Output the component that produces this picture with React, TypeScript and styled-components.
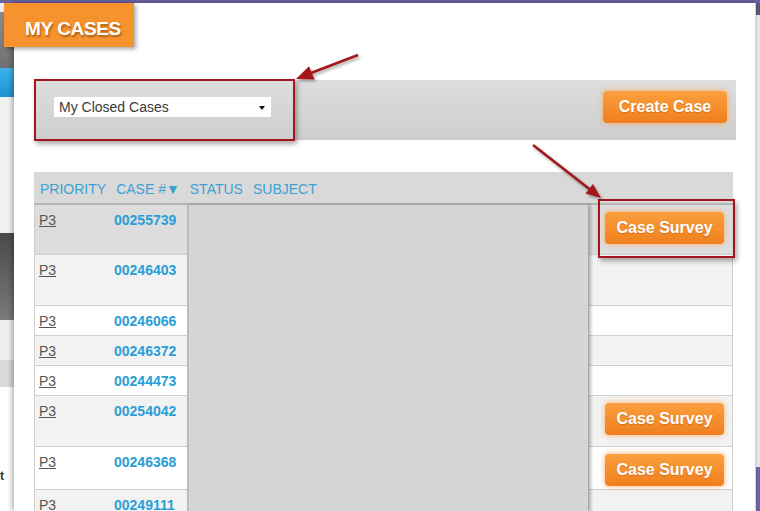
import React from "react";
import styled, { createGlobalStyle } from "styled-components";

const GlobalStyle = createGlobalStyle`
  html, body { margin: 0; padding: 0; background: #fff; }
  body { font-family: "Liberation Sans", Arial, sans-serif; }
  *, *::before, *::after { box-sizing: border-box; }
`;

const Page = styled.div`
  position: relative;
  width: 760px;
  height: 511px;
  overflow: hidden;
  font-family: "Liberation Sans", Arial, sans-serif;
`;

/* ---------- page behind the modal ---------- */
const Backdrop = styled.div`
  display: flex;
  flex-direction: column;
  height: 100%;
`;
const TopBar = styled.div`
  flex: none;
  height: 3px;
  background: #6b62a0;
`;
const BackdropBody = styled.div`
  flex: 1;
  display: flex;
`;
const SideStrip = styled.div<{ $w: number }>`
  flex: none;
  width: ${(p) => p.$w}px;
  display: flex;
  flex-direction: column;
`;
const StripBlock = styled.div<{ $h?: number; $bg: string }>`
  flex: ${(p) => (p.$h ? "none" : "1")};
  height: ${(p) => (p.$h ? `${p.$h}px` : "auto")};
  background: ${(p) => p.$bg};
  overflow: hidden;
  font: bold 12px "Liberation Sans", Arial, sans-serif;
  color: #333;
`;
const CutText = styled.span`
  display: block;
  margin: 82px 0 0 0;
`;
const BackdropFill = styled.div`
  flex: 1;
  background: #fff;
`;

/* ---------- modal ---------- */
const Modal = styled.div`
  position: absolute;
  left: 14px;
  top: 3px;
  width: 742px;
  bottom: 0;
  background: #fff;
  border-right: 1px solid #d2d2d2;
  box-shadow: -2px 0 5px rgba(0, 0, 0, 0.3);
  padding: 0 19px 0 20px;
`;

const TitleTab = styled.div`
  margin-left: -30px;
  width: 130px;
  height: 44px;
  background: #f7932f;
  box-shadow: 2px 2px 4px rgba(0, 0, 0, 0.35);
  padding: 15px 0 0 21px;
  color: #fff;
  font: bold 19px/22px "Liberation Sans", Arial, sans-serif;
  letter-spacing: -0.4px;
  text-shadow: 1px 2px 2px rgba(110, 50, 0, 0.55);
`;

const Toolbar = styled.div`
  margin-top: 33px;
  height: 60px;
  background: linear-gradient(to bottom, #dedede, #cdcdcd);
  display: flex;
  justify-content: space-between;
  align-items: flex-start;
  padding: 0 9px 0 20px;
`;

const SelectBox = styled.div`
  margin-top: 17px;
  width: 217px;
  height: 20px;
  background: #fff;
  padding: 0 4px 0 5px;
  display: flex;
  justify-content: space-between;
  align-items: center;
  color: #3a3a3a;
  font: 14px/20px "Liberation Sans", Arial, sans-serif;
`;
const SelectCaret = styled.span`
  width: 0;
  height: 0;
  border-left: 3.5px solid transparent;
  border-right: 3.5px solid transparent;
  border-top: 4px solid #111;
  margin: 1px 2px 0 0;
`;

const OrangeButton = styled.button<{ $w: number; $mt?: number }>`
  flex: none;
  margin-top: ${(p) => p.$mt ?? 0}px;
  width: ${(p) => p.$w}px;
  height: 32px;
  border: none;
  border-radius: 4px;
  padding: 0;
  background: linear-gradient(to bottom, #fb9f3e, #f07f1d);
  box-shadow: 0 0 5px 1px rgba(255, 175, 105, 0.75);
  color: #fff;
  font: bold 16px/32px "Liberation Sans", Arial, sans-serif;
  text-shadow: 0 1px 1px rgba(150, 70, 0, 0.35);
  text-align: center;
  cursor: pointer;
`;

/* ---------- table ---------- */
const CasesTable = styled.div`
  margin-top: 32px;
  width: 699px;
`;
const HeaderRow = styled.div`
  height: 33px;
  background: #d9d9d9;
  border-bottom: 2px solid #b4b4b4;
  padding: 9px 0 0 6px;
  display: flex;
  gap: 10px;
  color: #3ba2d4;
  font: 14px/16px "Liberation Sans", Arial, sans-serif;
`;
const Body = styled.div`
  position: relative;
`;
const Row = styled.div<{ $h: number; $bg: string }>`
  display: grid;
  grid-template-columns: 153px 401px 1fr;
  height: ${(p) => p.$h}px;
  background: ${(p) => p.$bg};
  border-left: 1px solid #cfcfcf;
  border-right: 1px solid #cfcfcf;
  border-bottom: 1px solid #cfcfcf;
`;
const IdCell = styled.div`
  display: grid;
  grid-template-columns: 75px auto;
  align-content: start;
  padding: 7px 0 0 4px;
  font: 14px/16px "Liberation Sans", Arial, sans-serif;
`;
const Priority = styled.span`
  color: #555;
  text-decoration: underline;
  justify-self: start;
`;
const CaseNo = styled.span`
  color: #2a9ed6;
  font-weight: bold;
`;
const ActionCell = styled.div`
  padding: 7px 0 0 16px;
`;
const Redaction = styled.div`
  position: absolute;
  top: 0;
  left: 153px;
  width: 402px;
  height: 320px;
  background: #d6d6d6;
  border-left: 2px solid #bcbcbc;
  border-right: 1px solid #a8a8a8;
  box-shadow: 2px 0 3px rgba(0, 0, 0, 0.25);
`;

/* ---------- annotations ---------- */
const RedBox = styled.div<{ $x: number; $y: number; $w: number; $h: number }>`
  position: absolute;
  left: ${(p) => p.$x}px;
  top: ${(p) => p.$y}px;
  width: ${(p) => p.$w}px;
  height: ${(p) => p.$h}px;
  border: 2px solid #a3161b;
  box-shadow: 2px 3px 5px rgba(0, 0, 0, 0.35);
  pointer-events: none;
`;
const ArrowLayer = styled.svg`
  position: absolute;
  left: 0;
  top: 0;
  pointer-events: none;
`;

type CaseRow = { no: string; h: number; bg: string; survey?: boolean };
const rows: CaseRow[] = [
  { no: "00255739", h: 50, bg: "#dddddd", survey: true },
  { no: "00246403", h: 51, bg: "#f2f2f2" },
  { no: "00246066", h: 30, bg: "#ffffff" },
  { no: "00246372", h: 30, bg: "#f2f2f2" },
  { no: "00244473", h: 30, bg: "#ffffff" },
  { no: "00254042", h: 51, bg: "#f2f2f2", survey: true },
  { no: "00246368", h: 43, bg: "#ffffff", survey: true },
  { no: "00249111", h: 40, bg: "#f2f2f2" },
];

const leftBlocks = [
  { h: 9, bg: "#ececf2" },
  { h: 56, bg: "linear-gradient(to bottom, #8c8c8c, #6f6f6f)" },
  { h: 29, bg: "linear-gradient(to bottom, #3cb4ea, #1d92d2)" },
  { h: 136, bg: "#f2f2f2" },
  { h: 87, bg: "linear-gradient(to bottom, #4a4a4a, #7a7a7a)" },
  { h: 40, bg: "#efefef" },
  { h: 27, bg: "#dadada" },
];

export default function App() {
  return (
    <Page>
      <GlobalStyle />
      <Backdrop>
        <TopBar />
        <BackdropBody>
          <SideStrip $w={14}>
            {leftBlocks.map((b, i) => (
              <StripBlock key={i} $h={b.h} $bg={b.bg} />
            ))}
            <StripBlock $bg="#ffffff">
              <CutText>t</CutText>
            </StripBlock>
          </SideStrip>
          <BackdropFill />
          <SideStrip $w={4}>
            <StripBlock $h={12} $bg="#5c5a7a" />
            <StripBlock $h={452} $bg="#e9e9e9" />
            <StripBlock $bg="#6e66a3" />
          </SideStrip>
        </BackdropBody>
      </Backdrop>

      <Modal>
        <TitleTab>MY CASES</TitleTab>
        <Toolbar>
          <SelectBox>
            My Closed Cases
            <SelectCaret />
          </SelectBox>
          <OrangeButton $w={124} $mt={11}>
            Create Case
          </OrangeButton>
        </Toolbar>

        <CasesTable>
          <HeaderRow>
            <span>PRIORITY</span>
            <span>CASE #▼</span>
            <span>STATUS</span>
            <span>SUBJECT</span>
          </HeaderRow>
          <Body>
            {rows.map((r) => (
              <Row key={r.no} $h={r.h} $bg={r.bg}>
                <IdCell>
                  <Priority>P3</Priority>
                  <CaseNo>{r.no}</CaseNo>
                </IdCell>
                <div />
                <ActionCell>
                  {r.survey && <OrangeButton $w={119}>Case Survey</OrangeButton>}
                </ActionCell>
              </Row>
            ))}
            <Redaction />
          </Body>
        </CasesTable>
      </Modal>

      <RedBox $x={34} $y={79} $w={261} $h={62} />
      <RedBox $x={598} $y={199} $w={137} $h={59} />
      <ArrowLayer width={760} height={511} viewBox="0 0 760 511">
        <defs>
          <filter id="sh" x="-20%" y="-20%" width="140%" height="140%">
            <feDropShadow dx="1.5" dy="2" stdDeviation="1.5" floodColor="#000" floodOpacity="0.35" />
          </filter>
        </defs>
        <g filter="url(#sh)" fill="#a3161b" stroke="#a3161b">
          <line x1={358} y1={55} x2={311} y2={73} strokeWidth={2.6} />
          <polygon points="296,79 314.5,79.6 309,66.2" stroke="none" />
          <line x1={533} y1={145} x2={590} y2={189.5} strokeWidth={2.6} />
          <polygon points="601,198 585.5,193.5 592.9,184.1" stroke="none" />
        </g>
      </ArrowLayer>
    </Page>
  );
}
